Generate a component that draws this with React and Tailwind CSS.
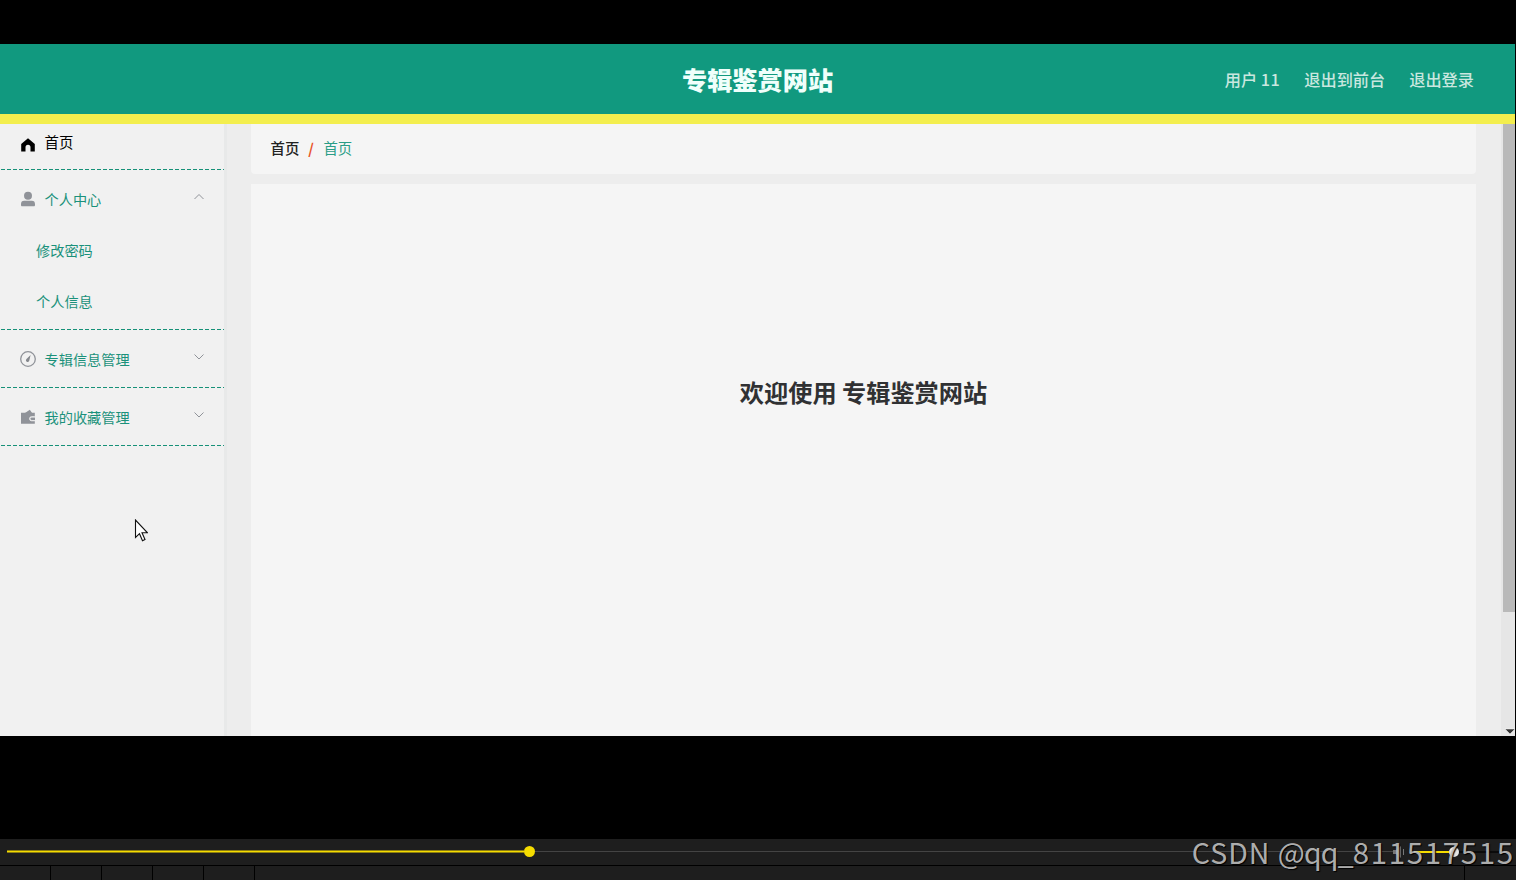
import React from "react";

const HomeIcon = () => (
  <svg viewBox="0 0 16 16" className="h-4 w-4" fill="#000">
    <path d="M8 1.2 1.2 7v7.6h4.3v-4.4a2.5 2.5 0 0 1 5 0v4.4h4.3V7z" />
  </svg>
);

const UserIcon = () => (
  <svg viewBox="0 0 16 16" className="h-4 w-4" fill="#909399">
    <circle cx="8" cy="4.8" r="4" />
    <path d="M1 13.2c0-2.3 1-3.4 3.2-3.4h7.6c2.200 0 3.200 1.100 3.200 3.400v.8c0 .9-.4 1.200-1.200 1.200H2.200C1.400 15.200 1 14.900 1 14z" />
  </svg>
);

const OdometerIcon = () => (
  <svg viewBox="0 0 16 16" className="h-4 w-4">
    <circle cx="8" cy="8" r="7.300" fill="none" stroke="#909399" strokeWidth="1.300" />
    <path d="M10.600 3.900 9.300 9.500a1.700 1.700 0 1 1-2.800-1.500z" fill="#85888d" />
  </svg>
);

const WalletIcon = () => (
  <svg viewBox="0 0 16 16" className="h-4 w-4" fill="#909399">
    <path d="M5 3.900 9.800.7l2.300 3.200z" />
    <path d="M1 3.700h13.800v4h-3.200a2 2 0 0 0 0 4.100h3.200v2.900H1z" />
    <path d="M11.700 8.400H15v2.700h-3.300a1.350 1.350 0 0 1 0-2.700z" />
    <path d="M14.800 7.600h-3.200a2.100 2.100 0 0 0 0 4.200h3.200" fill="none" stroke="#f1f1f1" strokeWidth=".8" />
  </svg>
);

const Chevron = ({ up }) => (
  <svg viewBox="0 0 12 8" className="h-2 w-3" fill="none" stroke="#909399" strokeWidth="1">
    <path d={up ? "M1.500 6 6 1.500 10.500 6" : "M1.500 1.500 6 6l4.500-4.500"} />
  </svg>
);

function MenuTitle({ icon, label, up }) {
  return (
    <div className="flex h-[57px] items-center pt-px pr-[19px] pl-[19.500px]">
      {icon}
      <span className="ml-[9px] flex-1 pb-px leading-5">{label}</span>
      <span className="pb-[5px]">
        <Chevron up={up} />
      </span>
    </div>
  );
}

function Dash() {
  return (
    <svg className="block h-px w-full" preserveAspectRatio="none">
      <line x1="1" y1="0.5" x2="224" y2="0.5" stroke="#169178" strokeWidth="1" strokeDasharray="4 2" />
    </svg>
  );
}

function Sidebar() {
  return (
    <aside className="w-[227px] shrink-0 border-r-[3px] border-[#e8e9e9] bg-[#f1f1f1] text-[14.200px] text-[#1b917b]">
      <div className="flex h-[45px] items-center pb-[8px] pl-[19.500px] text-[14.400px] text-black">
        <span className="pt-[4px]">
          <HomeIcon />
        </span>
        <span className="ml-[9px] pb-[2px] leading-5">首页</span>
      </div>
      <Dash />
      <MenuTitle icon={<UserIcon />} label="个人中心" up />
      <div className="flex h-[50px] items-center pb-[2px] pl-[36px]">修改密码</div>
      <div className="flex h-[52px] items-center pb-[3px] pl-[36px]">个人信息</div>
      <Dash />
      <MenuTitle icon={<OdometerIcon />} label="专辑信息管理" />
      <Dash />
      <MenuTitle icon={<WalletIcon />} label="我的收藏管理" />
      <Dash />
    </aside>
  );
}

function Scrollbar() {
  return (
    <div className="flex w-[14px] shrink-0 flex-col items-end justify-between bg-[#e6e6e6]">
      <div className="h-[488px] w-[12px] bg-[#b9b9b9]" />
      <svg viewBox="0 0 10 8" className="h-2 w-[10px]">
        <path d="M0 1h10L5 6z" fill="#333" stroke="#fff" strokeWidth=".5" />
      </svg>
    </div>
  );
}

function Player() {
  return (
    <footer className="relative mt-[103px] h-[41px] bg-black">
      <div className="flex h-[26px] items-center bg-[#1e1e1e] pb-px pl-[7px]">
        <div className="h-[3px] w-[517px] border-y border-[#8d7f10] bg-[#f5dc00]" />
        <div className="h-[11px] w-[11px] rounded-full bg-[#f5dc00]" />
        <div className="h-px w-[858px] bg-[#444]" />
        <svg viewBox="0 0 14 12" className="h-3 w-[14px]" fill="#777">
          <path d="M0 4h3l5-4v12L3 8H0zM10 3h1v6h-1z" />
        </svg>
        <div className="ml-[7px] h-[2px] w-[35px] bg-[#f5dc00]" />
        <div className="h-[10px] w-[10px] rounded-full bg-[#e6e6e6]" />
        <div className="h-[2px] w-[40px] bg-[#0b0b0b]" />
      </div>
      <div className="mt-px flex h-[14px] gap-px">
        <div className="w-[50px] bg-[#1e1e1e]" />
        <div className="w-[50px] bg-[#1e1e1e]" />
        <div className="w-[50px] bg-[#1e1e1e]" />
        <div className="w-[50px] bg-[#1e1e1e]" />
        <div className="w-[50px] bg-[#1e1e1e]" />
        <div className="flex-1 bg-[#1e1e1e]" />
        <div className="w-[51px] bg-[#1e1e1e]" />
      </div>
      <div className="absolute top-[-4px] right-[3px] flex items-baseline leading-8 whitespace-pre text-[#c4c4c4]/90 [text-shadow:1px_1px_1px_#000]">
        <span className="text-[28.500px] tracking-[1px]">CSDN </span>
        <span className="text-[28.500px] tracking-[-0.800px]">@qq_</span>
        <span className="text-[29.500px] tracking-[1.600px]">81151751</span>
        <span className="text-[29.500px]">5</span>
      </div>
    </footer>
  );
}

export default function App() {
  return (
    <div className="h-[880px] w-[1516px] overflow-hidden bg-black pt-[44px] font-['Noto_Sans_CJK_SC',sans-serif]">
      <div className="mr-px">
        <header className="grid h-[80px] grid-cols-3 items-center border-b-[10px] border-[#f3ee4e] bg-[#11997f]">
          <div />
          <h1 className="pb-px text-center text-[25.200px] leading-9 font-black text-[#f0fffb]">专辑鉴赏网站</h1>
          <nav className="flex justify-end gap-[24px] pr-[41px] text-[16.200px] font-medium text-[#c9e7df]">
            <span>
              用户 <span className="tracking-[0.5px]">11</span>
            </span>
            <span>退出到前台</span>
            <span>退出登录</span>
          </nav>
        </header>
        <div className="flex h-[612px] overflow-hidden bg-[#ededed]">
          <Sidebar />
          <main className="flex flex-1 flex-col gap-[10px] pr-[25px] pl-[24px]">
            <div className="flex h-[50px] shrink-0 items-center rounded-b bg-[#f5f5f5] pb-[2px] pl-[19.500px] text-[14.400px]">
              <span className="font-medium text-[#222]">首页</span>
              <span className="mr-[9.500px] ml-[9px] font-bold text-[#e8521f]">/</span>
              <span className="text-[#2a9d87]">首页</span>
            </div>
            <section className="flex-1 bg-[#f5f5f5] pt-[190px] text-center text-[24.200px] leading-9 font-bold text-[#303133]">
              欢迎使用 专辑鉴赏网站
            </section>
          </main>
          <Scrollbar />
        </div>
      </div>
      <Player />
      <svg viewBox="0 0 14 23" className="absolute top-[519px] left-[134px] h-[23px] w-[14px]">
        <path d="M1.500 1v17.500l4-3.800 3 7 2.500-1.200-3-6.700h5.500z" fill="#fff" stroke="#111" strokeWidth="1.100" />
      </svg>
    </div>
  );
}
